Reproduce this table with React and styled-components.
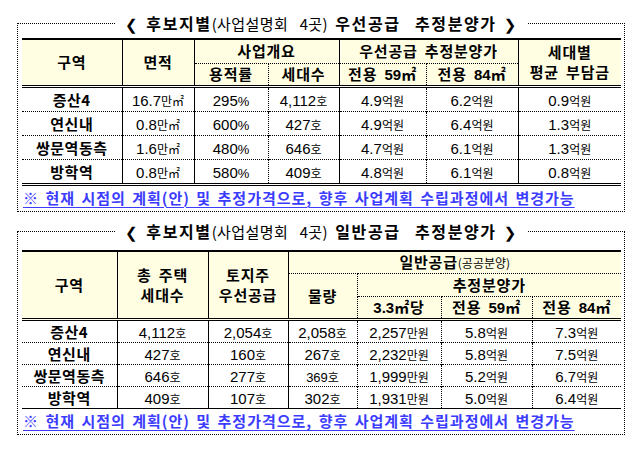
import React from 'react';
import styled, { createGlobalStyle } from 'styled-components';

const GlobalStyle = createGlobalStyle`
  html, body {
    margin: 0;
    background: #fff;
    color: #000;
    font-family: "Noto Sans CJK KR", sans-serif;
  }
`;

const line = (kind) => {
  if (kind === 'solid') return '1px solid #000';
  if (kind === 'dotted') return '1px dotted #000';
  return 'none';
};

const Page = styled.div`
  width: 643px;
  height: 454px;
  box-sizing: border-box;
  padding: 23px 18px 0 17px;
  display: flex;
  flex-direction: column;
  gap: 19px;
  overflow: hidden;
`;

const Box = styled.section`
  border: 1px dotted #000;
  padding: 0 3px 0 4px;
`;

const TitleRow = styled.div`
  display: flex;
  justify-content: center;
  margin-top: -13px;
  margin-bottom: ${(p) => p.$gap}px;
`;

const Title = styled.h2`
  margin: 0;
  padding: 0 9px;
  background: #fff;
  font-size: 16px;
  font-weight: 700;
  line-height: 24px;
  letter-spacing: 1.6px;
  word-spacing: 2px;
  white-space: pre;
`;

const Bracket = styled.span`
  font-family: "DejaVu Sans", sans-serif;
  font-size: 15px;
  font-weight: 700;
`;

const TitleSub = styled.span`
  font-size: 15px;
  font-weight: 400;
  letter-spacing: 0.4px;
`;

const Table = styled.table`
  width: 599px;
  table-layout: fixed;
  border-collapse: collapse;
  border-top: 2px solid #000;
  border-bottom: ${(p) => (p.$double ? '3px double #000' : '1px solid #000')};
`;

const Th = styled.th`
  background: #fffee3;
  padding: 0;
  font-size: 15px;
  font-weight: 700;
  line-height: 20px;
  letter-spacing: 0.8px;
  word-spacing: 3px;
  text-align: center;
  vertical-align: middle;
  white-space: nowrap;
  border-right: ${(p) => line(p.$r)};
  border-bottom: ${(p) => line(p.$b)};
`;

const HeadRow = styled.tr`
  height: ${(p) => p.$h}px;
`;

const Td = styled.td`
  padding: 0;
  height: ${(p) => p.$h}px;
  text-align: center;
  vertical-align: middle;
  white-space: nowrap;
  font-size: 15px;
  font-weight: ${(p) => (p.$label ? 700 : 400)};
  letter-spacing: ${(p) => (p.$label ? '0.5px' : '0')};
  border-right: ${(p) => line(p.$r)};
  border-top: ${(p) => (p.$first ? '3px double #000' : '1px dotted #000')};
`;

const Num = styled.span`
  font-family: "Liberation Sans", Arial, sans-serif;
  font-size: ${(p) => (p.$small ? 13 : 15)}px;
  font-weight: ${(p) => (p.$bold ? 700 : 400)};
  letter-spacing: 0;
`;

const Unit = styled.span`
  font-size: 12px;
  font-weight: ${(p) => (p.$bold ? 700 : 400)};
`;

const Pct = styled.span`
  font-family: "Liberation Sans", Arial, sans-serif;
  font-size: 13px;
`;

const Paren = styled.span`
  font-size: 12px;
  font-weight: 400;
  letter-spacing: 0;
`;

const Note = styled.p`
  margin: 0;
  height: 25px;
  padding-left: 1px;
  font-size: 15px;
  font-weight: 700;
  line-height: 24px;
  color: #3c3cff;
  white-space: pre;
  letter-spacing: 1px;
  word-spacing: 2px;
  text-decoration: underline;
  text-decoration-thickness: 1px;
  text-underline-offset: 3px;
`;

const NOTE = '※ 현재 시점의 계획(안) 및 추정가격으로, 향후 사업계획 수립과정에서 변경가능';

const supplyRows = [
  ['증산4', '16.7', '295', '4,112', '4.9', '6.2', '0.9'],
  ['연신내', '0.8', '600', '427', '4.9', '6.4', '1.3'],
  ['쌍문역동측', '1.6', '480', '646', '4.7', '6.1', '1.3'],
  ['방학역', '0.8', '580', '409', '4.8', '6.1', '0.8'],
];

const generalRows = [
  ['증산4', '4,112', '2,054', '2,058', '2,257', '5.8', '7.3'],
  ['연신내', '427', '160', '267', '2,232', '5.8', '7.5'],
  ['쌍문역동측', '646', '277', '369', '1,999', '5.2', '6.7'],
  ['방학역', '409', '107', '302', '1,931', '5.0', '6.4'],
];

function Area({ size, bold }) {
  return (
    <>
      전용 <Num $bold={bold}>{size}</Num>㎡
    </>
  );
}

function BlockTitle({ name, gap }) {
  return (
    <TitleRow $gap={gap}>
      <Title>
        <Bracket>❮</Bracket> 후보지별<TitleSub>(사업설명회  4곳)</TitleSub> {name} <Bracket>❯</Bracket>
      </Title>
    </TitleRow>
  );
}

function SupplyTable() {
  const borders = ['solid', 'solid', 'dotted', 'solid', 'dotted', 'solid', null];
  const units = [null, '만㎡', '%', '호', '억원', '억원', '억원'];
  return (
    <Table $double>
      <colgroup>
        {[100, 72, 74, 71, 87, 92, 103].map((w, i) => (
          <col key={i} style={{ width: w }} />
        ))}
      </colgroup>
      <thead>
        <HeadRow $h={24}>
          <Th rowSpan={2} $r="solid">구역</Th>
          <Th rowSpan={2} $r="solid">면적</Th>
          <Th colSpan={2} $r="solid" $b="dotted">사업개요</Th>
          <Th colSpan={2} $r="solid" $b="dotted">우선공급 추정분양가</Th>
          <Th rowSpan={2}>세대별<br />평균 부담금</Th>
        </HeadRow>
        <HeadRow $h={23}>
          <Th $r="dotted">용적률</Th>
          <Th $r="solid">세대수</Th>
          <Th $r="dotted"><Area size="59" bold /></Th>
          <Th $r="solid"><Area size="84" bold /></Th>
        </HeadRow>
      </thead>
      <tbody>
        {supplyRows.map((row, ri) => (
          <tr key={row[0]}>
            {row.map((cell, ci) => (
              <Td key={ci} $h={23} $r={borders[ci]} $first={ri === 0} $label={ci === 0}>
                {ci === 0 ? cell : <Num>{cell}</Num>}
                {units[ci] === '%' ? <Pct>%</Pct> : units[ci] && <Unit>{units[ci]}</Unit>}
              </Td>
            ))}
          </tr>
        ))}
      </tbody>
    </Table>
  );
}

function GeneralTable() {
  const borders = ['solid', 'solid', 'solid', 'dotted', 'dotted', 'dotted', null];
  const units = [null, '호', '호', '호', '만원', '억원', '억원'];
  return (
    <Table>
      <colgroup>
        {[95, 91, 80, 69, 84, 91, 89].map((w, i) => (
          <col key={i} style={{ width: w }} />
        ))}
      </colgroup>
      <thead>
        <HeadRow $h={23}>
          <Th rowSpan={3} $r="solid">구역</Th>
          <Th rowSpan={3} $r="solid">총 주택<br />세대수</Th>
          <Th rowSpan={3} $r="solid">토지주<br />우선공급</Th>
          <Th colSpan={4} $b="dotted">일반공급<Paren>(공공분양)</Paren></Th>
        </HeadRow>
        <HeadRow $h={23}>
          <Th rowSpan={2} $r="dotted">물량</Th>
          <Th colSpan={3} $b="dotted">추정분양가</Th>
        </HeadRow>
        <HeadRow $h={20}>
          <Th $r="dotted"><Num $bold>3.3</Num>㎡당</Th>
          <Th $r="dotted"><Area size="59" bold /></Th>
          <Th><Area size="84" bold /></Th>
        </HeadRow>
      </thead>
      <tbody>
        {generalRows.map((row, ri) => (
          <tr key={row[0]}>
            {row.map((cell, ci) => (
              <Td key={ci} $h={21} $r={borders[ci]} $first={ri === 0} $label={ci === 0}>
                {ci === 0 ? cell : <Num $small={cell === '369'}>{cell}</Num>}
                {units[ci] && <Unit>{units[ci]}</Unit>}
              </Td>
            ))}
          </tr>
        ))}
      </tbody>
    </Table>
  );
}

export default function App() {
  return (
    <>
      <GlobalStyle />
      <Page>
        <Box>
          <BlockTitle name="우선공급  추정분양가" gap={1} />
          <SupplyTable />
          <Note>{NOTE}</Note>
        </Box>
        <Box>
          <BlockTitle name="일반공급  추정분양가" gap={5} />
          <GeneralTable />
          <Note>{NOTE}</Note>
        </Box>
      </Page>
    </>
  );
}
